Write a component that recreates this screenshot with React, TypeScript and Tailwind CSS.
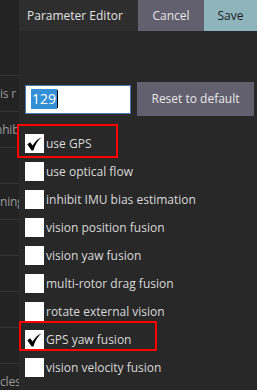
import React from "react";

const items: { label: string; checked: boolean }[] = [
  { label: "use GPS", checked: true },
  { label: "use optical flow", checked: false },
  { label: "inhibit IMU bias estimation", checked: false },
  { label: "vision position fusion", checked: false },
  { label: "vision yaw fusion", checked: false },
  { label: "multi-rotor drag fusion", checked: false },
  { label: "rotate external vision", checked: false },
  { label: "GPS yaw fusion", checked: true },
  { label: "vision velocity fusion", checked: false },
];

const stripRows: { t: string; shift: boolean }[] = [
  { t: "is r", shift: false },
  { t: "nhib", shift: true },
  { t: "", shift: false },
  { t: "ning", shift: false },
  { t: "", shift: false },
  { t: "", shift: false },
  { t: "", shift: false },
  { t: "", shift: false },
  { t: "cles", shift: false },
];

function Check() {
  return (
    <svg width="15" height="14" viewBox="0 0 15 14" className="block -ml-[1px] mt-[1px]">
      <path d="M0.3 7.3 L3.2 5.2 L5.6 8.6 C8 4.8 10.5 2 14.7 0.3 C10.8 3.4 8.3 7.6 6.4 13.4 L4.6 13.4 Z" fill="#000" />
    </svg>
  );
}

export default function App() {
  return (
    <div className="relative flex w-[257px] h-[390px] overflow-hidden bg-[#282828] font-['Open_Sans',sans-serif]">
      {/* left strip */}
      <div className="w-[19px] shrink-0 bg-[#232323] flex flex-col overflow-hidden">
        <div className="h-[75px] shrink-0" />
        {stripRows.map((r, i) => (
          <div
            key={i}
            className="h-[36px] shrink-0 border-t border-[#343434] flex items-center text-[12px] tracking-[-0.2px] text-[#9a9a9a] whitespace-nowrap overflow-hidden"
          >
            <span className={r.shift ? "-ml-[5px]" : ""}>{r.t}</span>
          </div>
        ))}
      </div>

      {/* main panel */}
      <div className="flex-1 flex flex-col min-w-0">
        <div className="h-[31px] flex shrink-0">
          <div className="flex-1 bg-[#2e2e2e] flex items-center pl-[8px] text-[12px] text-[#e4e4e4] whitespace-nowrap">
            Parameter Editor
          </div>
          <div className="w-[66px] bg-[#625f6e] flex items-center justify-center text-[12px] text-[#e8e8e8]">
            Cancel
          </div>
          <div className="w-[53px] bg-[#8fb5bc] flex items-center justify-center text-[12px] text-[#1c1c1c]">
            Save
          </div>
        </div>

        <div className="pt-[51px] pl-[6px] pr-[3px]">
          <div className="flex items-center gap-[6px] h-[34px]">
            <div className="w-[106px] h-[29px] bg-white border border-[#4a78b5] flex items-center pl-[5px]">
              <span className="bg-[#3390d6] text-white text-[14px] leading-[20px] px-[1px]">129</span>
              <span className="w-[1px] h-[18px] bg-black" />
            </div>
            <div className="w-[117px] h-[34px] bg-[#625f6e] flex items-center justify-center text-[12px] text-[#e8e8e8] whitespace-nowrap">
              Reset to default
            </div>
          </div>

          <div className="mt-[18px] flex flex-col gap-[9px]">
            {items.map((it) => (
              <div key={it.label} className="h-[19px] flex items-center gap-[2px]">
                <div className="w-[19px] h-[19px] bg-white flex items-center justify-center shrink-0">
                  {it.checked && <Check />}
                </div>
                <span className="text-[12px] text-[#d9d9d9] whitespace-nowrap">{it.label}</span>
              </div>
            ))}
          </div>
        </div>
      </div>

      {/* annotation boxes */}
      <div className="absolute left-[17px] top-[124px] w-[101px] h-[34px] border-2 border-[#f00]" />
      <div className="absolute left-[19px] top-[321px] w-[138px] h-[30px] border-2 border-[#f00]" />
    </div>
  );
}
